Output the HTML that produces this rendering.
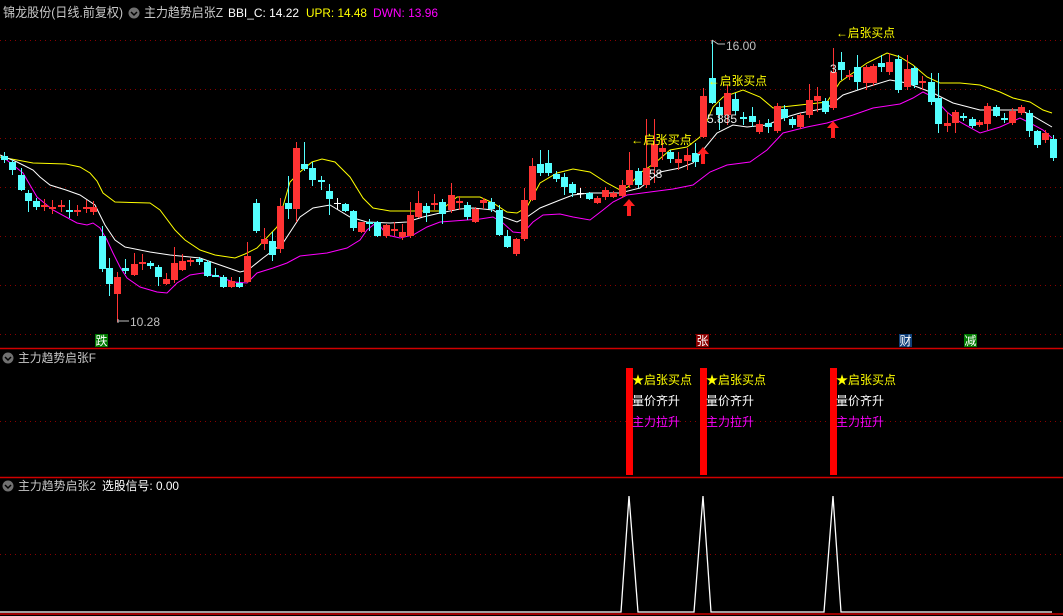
<!DOCTYPE html>
<html><head><meta charset="utf-8"><style>
html,body{margin:0;padding:0;background:#000;width:1063px;height:616px;overflow:hidden}
svg{display:block}
text{font-family:"Liberation Sans","Noto Sans CJK SC",sans-serif}
</style></head><body>
<svg width="1063" height="616" viewBox="0 0 1063 616" xmlns="http://www.w3.org/2000/svg">
<rect width="1063" height="616" fill="#000"/>
<!-- grid -->
<g stroke="#8a0000" stroke-width="1" stroke-dasharray="1,4">
<line x1="0" y1="40.5" x2="1063" y2="40.5"/><line x1="0" y1="89.5" x2="1063" y2="89.5"/>
<line x1="0" y1="138.5" x2="1063" y2="138.5"/><line x1="0" y1="187.5" x2="1063" y2="187.5"/>
<line x1="0" y1="236.5" x2="1063" y2="236.5"/><line x1="0" y1="285.5" x2="1063" y2="285.5"/>
<line x1="0" y1="334.5" x2="1063" y2="334.5"/><line x1="0" y1="421.5" x2="1063" y2="421.5"/>
<line x1="0" y1="554.5" x2="1063" y2="554.5"/>
</g>
<g stroke="#d00000" stroke-width="1.5">
<line x1="0" y1="348.5" x2="1063" y2="348.5"/><line x1="0" y1="477.5" x2="1063" y2="477.5"/><line x1="0" y1="614" x2="1063" y2="614"/>
</g>
<!-- lines -->
<polyline fill="none" stroke="#ffff00" stroke-width="1" points="0,157 17,160 33,163 66,164 80,167 90,173 97,181 103,193 115,202 150,203 160,210 175,230 185,240 200,250 215,255 235,258 245,254 257,248 277,227 290,182 300,172 312,162 322,159 335,162 350,177 363,198 373,208 390,211 440,211 457,197 480,197 493,203 507,212 517,213 527,207 540,183 557,173 573,169 590,172 607,183 620,190 628,187 640,173 655,163 670,150 687,147 700,137 713,107 723,97 743,90 760,97 773,108 800,105 827,102 840,82 867,63 887,53 900,57 913,65 927,77 940,83 960,83 980,85 1000,92 1013,98 1030,102 1043,110 1052,113"/>
<polyline fill="none" stroke="#ffffff" stroke-width="1" points="0,155 17,162 33,170 40,177 50,185 66,190 80,195 95,205 105,225 115,240 125,247 150,252 170,255 200,258 220,265 240,272 248,270 263,258 283,243 300,217 313,208 330,205 350,217 367,222 390,223 407,222 423,217 440,213 460,209 473,208 493,210 503,217 517,222 527,217 540,208 560,200 573,195 590,193 620,193 640,188 660,172 680,168 693,163 703,150 717,133 733,125 747,127 767,125 783,118 800,113 827,108 843,95 867,87 890,80 907,83 920,88 933,93 953,103 980,110 1020,110 1033,116 1052,127"/>
<polyline fill="none" stroke="#ff00ff" stroke-width="1" points="3,157 23,173 37,197 53,210 77,223 87,225 93,223 100,228 107,240 113,253 120,267 127,278 140,287 157,292 167,293 177,283 190,275 203,273 220,277 233,282 247,283 257,273 273,268 287,263 300,256 327,253 347,248 360,240 367,230 377,222 387,235 400,238 413,235 427,227 440,222 467,220 480,219 493,217 503,223 513,232 523,233 533,222 543,215 560,214 573,217 590,220 603,210 613,202 627,195 650,192 673,189 693,185 710,172 727,165 750,162 767,150 783,133 807,127 827,123 853,115 873,108 900,104 913,98 923,92 933,97 947,112 960,122 980,133 1000,127 1020,118 1030,123 1043,130 1052,138"/>
<!-- cyan candles -->
<g fill="#54ffff" stroke="#54ffff" stroke-width="1">
<path fill="none" d="M4.5 152V163M12.5 160V175M21.5 168V191M28.5 190V212M36.5 198V210M69.5 200V218M102.5 226V272M109.5 258V296M125.5 259V274M150.5 261V269M158.5 265V286M199.5 257V265M207.5 260V277M215.5 268V277M223.5 275V288M239.5 277V288M256.5 199V233M272.5 232V261M288.5 176V219M304.5 142V171M312.5 162V186M321.5 176V190M329.5 184V215M345.5 203V212M353.5 210V231M369.5 219V231M377.5 221V237M426.5 203V222M442.5 199V224M467.5 202V220M491.5 198V212M499.5 205V236M507.5 230V248M540.5 150V176M548.5 150V176M556.5 171V182M564.5 173V195M572.5 182V197M589.5 192V200M638.5 168V188M670.5 150V163M695.5 143V167M712.5 40V104M719.5 102V130M735.5 93V115M743.5 112V125M752.5 107V127M768.5 119V133M784.5 105V121M792.5 117V128M825.5 98V114M841.5 52V80M857.5 55V90M881.5 55V72M898.5 55V93M914.5 66V88M931.5 73V105M938.5 73V133M963.5 113V121M972.5 117V128M996.5 105V117M1004.5 113V123M1029.5 110V137M1037.5 130V148M1053.5 135V161"/>
<g stroke="none">
<rect x="1" y="156" width="7" height="4"/><rect x="9" y="162" width="7" height="8"/><rect x="18" y="175" width="7" height="15"/><rect x="25" y="193" width="7" height="8"/><rect x="33" y="201" width="7" height="6"/><rect x="66" y="210" width="7" height="2"/><rect x="99" y="236" width="7" height="33"/><rect x="106" y="268" width="7" height="16"/><rect x="122" y="268" width="7" height="3"/><rect x="147" y="263" width="7" height="3"/><rect x="155" y="267" width="7" height="10"/><rect x="196" y="259" width="7" height="3"/><rect x="204" y="262" width="7" height="14"/><rect x="212" y="275" width="7" height="2"/><rect x="220" y="277" width="7" height="10"/><rect x="236" y="283" width="7" height="4"/><rect x="253" y="203" width="7" height="28"/><rect x="269" y="241" width="7" height="14"/><rect x="285" y="203" width="7" height="6"/><rect x="301" y="164" width="7" height="5"/><rect x="309" y="168" width="7" height="12"/><rect x="318" y="180" width="7" height="2"/><rect x="326" y="191" width="7" height="8"/><rect x="342" y="204" width="7" height="7"/><rect x="350" y="211" width="7" height="17"/><rect x="366" y="222" width="7" height="2"/><rect x="374" y="222" width="7" height="14"/><rect x="423" y="206" width="7" height="7"/><rect x="439" y="202" width="7" height="12"/><rect x="464" y="205" width="7" height="12"/><rect x="488" y="202" width="7" height="7"/><rect x="496" y="210" width="7" height="25"/><rect x="504" y="236" width="7" height="11"/><rect x="537" y="164" width="7" height="9"/><rect x="545" y="163" width="7" height="10"/><rect x="553" y="174" width="7" height="5"/><rect x="561" y="177" width="7" height="10"/><rect x="569" y="184" width="7" height="9"/><rect x="586" y="193" width="7" height="6"/><rect x="635" y="171" width="7" height="14"/><rect x="667" y="152" width="7" height="7"/><rect x="692" y="153" width="7" height="9"/><rect x="709" y="78" width="7" height="25"/><rect x="716" y="107" width="7" height="8"/><rect x="732" y="99" width="7" height="12"/><rect x="740" y="117" width="7" height="2"/><rect x="749" y="116" width="7" height="6"/><rect x="765" y="123" width="7" height="4"/><rect x="781" y="109" width="7" height="9"/><rect x="789" y="119" width="7" height="6"/><rect x="822" y="101" width="7" height="11"/><rect x="838" y="62" width="7" height="8"/><rect x="854" y="67" width="7" height="15"/><rect x="878" y="63" width="7" height="4"/><rect x="895" y="59" width="7" height="31"/><rect x="911" y="68" width="7" height="17"/><rect x="928" y="82" width="7" height="20"/><rect x="935" y="98" width="7" height="26"/><rect x="960" y="116" width="7" height="2"/><rect x="969" y="119" width="7" height="7"/><rect x="993" y="107" width="7" height="9"/><rect x="1001" y="118" width="7" height="2"/><rect x="1026" y="113" width="7" height="18"/><rect x="1034" y="131" width="7" height="14"/><rect x="1050" y="139" width="7" height="19"/>
</g></g>
<!-- white dojis -->
<path stroke="#fff" fill="none" d="M337.5 198V209M334 203.5H341M580.5 188V198M577 193.5H584"/>
<!-- red candles -->
<g fill="#ff3333">
<path fill="none" stroke="#ff3333" d="M44.5 199V211M52.5 200V214M61.5 200V212M77.5 205V216M86.5 200V213M93.5 201V215M117.5 272V322M134.5 253V276M142.5 254V270M166.5 273V285M174.5 247V283M182.5 254V271M190.5 258V266M231.5 277V288M247.5 242V283M264.5 228V250M280.5 198V253M296.5 142V222M361.5 222V233M386.5 224V238M394.5 222V236M402.5 224V240M410.5 202V238M418.5 191V218M434.5 194V210M451.5 183V213M459.5 196V210M475.5 207V223M483.5 198V209M516.5 238V256M524.5 188V241M532.5 158V201M597.5 196V204M605.5 187V200M613.5 191V198M622.5 180V198M629.5 152V188M646.5 119V188M654.5 119V183M662.5 140V160M678.5 152V170M687.5 148V170M703.5 88V138M727.5 85V125M759.5 120V134M777.5 103V133M800.5 113V129M809.5 84V118M817.5 87V112M833.5 48V110M849.5 70V80M866.5 65V90M873.5 64V86M889.5 53V75M907.5 55V90M922.5 76V90M947.5 112V132M955.5 110V133M979.5 120V127M987.5 103V130M1012.5 108V125M1021.5 105V115M1045.5 130V143"/>
<rect x="41" y="205" width="7" height="2"/><rect x="49" y="207" width="7" height="2"/><rect x="58" y="205" width="7" height="2"/><rect x="74" y="210" width="7" height="2"/><rect x="83" y="207" width="7" height="2"/><rect x="90" y="207" width="7" height="5"/><rect x="114" y="277" width="7" height="17"/><rect x="131" y="264" width="7" height="11"/><rect x="139" y="262" width="7" height="2"/><rect x="163" y="279" width="7" height="5"/><rect x="171" y="263" width="7" height="17"/><rect x="179" y="261" width="7" height="9"/><rect x="187" y="260" width="7" height="2"/><rect x="228" y="281" width="7" height="6"/><rect x="244" y="256" width="7" height="26"/><rect x="261" y="239" width="7" height="5"/><rect x="277" y="206" width="7" height="43"/><rect x="293" y="148" width="7" height="61"/><rect x="358" y="222" width="7" height="10"/><rect x="383" y="225" width="7" height="11"/><rect x="391" y="229" width="7" height="2"/><rect x="399" y="232" width="7" height="5"/><rect x="407" y="215" width="7" height="21"/><rect x="415" y="203" width="7" height="14"/><rect x="431" y="203" width="7" height="2"/><rect x="448" y="195" width="7" height="15"/><rect x="456" y="201" width="7" height="2"/><rect x="472" y="209" width="7" height="13"/><rect x="480" y="200" width="7" height="3"/><rect x="513" y="239" width="7" height="15"/><rect x="521" y="200" width="7" height="39"/><rect x="529" y="166" width="7" height="34"/><rect x="594" y="198" width="7" height="5"/><rect x="602" y="190" width="7" height="7"/><rect x="610" y="193" width="7" height="4"/><rect x="619" y="185" width="7" height="11"/><rect x="626" y="170" width="7" height="15"/><rect x="643" y="168" width="7" height="17"/><rect x="651" y="144" width="7" height="23"/><rect x="659" y="148" width="7" height="4"/><rect x="675" y="159" width="7" height="4"/><rect x="684" y="155" width="7" height="6"/><rect x="700" y="96" width="7" height="41"/><rect x="724" y="93" width="7" height="22"/><rect x="756" y="124" width="7" height="8"/><rect x="774" y="106" width="7" height="25"/><rect x="797" y="115" width="7" height="12"/><rect x="806" y="100" width="7" height="15"/><rect x="814" y="96" width="7" height="5"/><rect x="830" y="72" width="7" height="36"/><rect x="846" y="75" width="7" height="2"/><rect x="863" y="67" width="7" height="16"/><rect x="870" y="66" width="7" height="17"/><rect x="886" y="62" width="7" height="10"/><rect x="904" y="69" width="7" height="18"/><rect x="919" y="81" width="7" height="2"/><rect x="944" y="123" width="7" height="3"/><rect x="952" y="112" width="7" height="11"/><rect x="976" y="122" width="7" height="3"/><rect x="984" y="106" width="7" height="18"/><rect x="1009" y="111" width="7" height="12"/><rect x="1018" y="107" width="7" height="6"/><rect x="1042" y="133" width="7" height="7"/>
</g>
<!-- red arrows -->
<g fill="#ff2020">
<path d="M629 199L623 206H627V216H631V206H635Z"/>
<path d="M703 147L697 154H701V164H705V154H709Z"/>
<path d="M833 121L827 128H831V138H835V128H839Z"/>
</g>
<!-- annotations -->
<g font-size="12" fill="#ffff00">
<text x="631" y="144" textLength="61" lengthAdjust="spacingAndGlyphs">←启张买点</text>
<text x="708" y="85" textLength="59" lengthAdjust="spacingAndGlyphs">←启张买点</text>
<text x="836" y="37" textLength="59" lengthAdjust="spacingAndGlyphs">←启张买点</text>
</g>
<g font-size="12" fill="#e8e8e8">
<text x="707" y="123">5.885</text>
<text x="649" y="178">58</text>
<text x="830" y="73">3</text>
</g>
<g font-size="12" fill="#c0c0c0">
<text x="726" y="50">16.00</text>
<text x="130" y="326">10.28</text>
</g>
<path d="M712 40L718 44H725M712 40V44M118 321H129M118 319V323" stroke="#c0c0c0" fill="none"/>
<!-- bottom tags -->
<rect x="95" y="334" width="13" height="13" fill="#007a00"/><text x="95.5" y="345" font-size="12" fill="#fff">跌</text>
<rect x="696" y="334" width="13" height="13" fill="#8b0000"/><text x="696.5" y="345" font-size="12" fill="#fff">张</text>
<rect x="899" y="334" width="13" height="13" fill="#10407a"/><text x="899.5" y="345" font-size="12" fill="#fff">财</text>
<rect x="964" y="334" width="13" height="13" fill="#007a00"/><text x="964.5" y="345" font-size="12" fill="#fff">减</text>
<!-- header -->
<text x="3" y="17" font-size="13" fill="#c8c8c8" textLength="120" lengthAdjust="spacingAndGlyphs">锦龙股份(日线.前复权)</text>
<circle cx="134" cy="13" r="5.5" fill="#707070"/><path d="M131 12L134 15L137 12" stroke="#000" stroke-width="1.5" fill="none"/>
<text x="144" y="17" font-size="13" fill="#c8c8c8" textLength="79" lengthAdjust="spacingAndGlyphs">主力趋势启张Z</text>
<text x="228" y="17" font-size="12" fill="#ffffff" textLength="71" lengthAdjust="spacingAndGlyphs">BBI_C: 14.22</text>
<text x="306" y="17" font-size="12" fill="#ffff00" textLength="61" lengthAdjust="spacingAndGlyphs">UPR: 14.48</text>
<text x="373" y="17" font-size="12" fill="#ff00ff" textLength="65" lengthAdjust="spacingAndGlyphs">DWN: 13.96</text>
<!-- panel 2 -->
<circle cx="8" cy="358" r="5.5" fill="#707070"/><path d="M5 357L8 360L11 357" stroke="#000" stroke-width="1.5" fill="none"/>
<text x="18" y="362" font-size="12" fill="#c8c8c8" textLength="78" lengthAdjust="spacingAndGlyphs">主力趋势启张F</text>
<g fill="#ff0000"><rect x="626" y="368" width="7" height="107"/><rect x="700" y="368" width="7" height="107"/><rect x="830" y="368" width="7" height="107"/></g>
<g font-size="12">
<text x="632" y="384" fill="#ffff00">★启张买点</text><text x="632" y="405" fill="#fff">量价齐升</text><text x="632" y="426" fill="#ff00ff">主力拉升</text>
<text x="706" y="384" fill="#ffff00">★启张买点</text><text x="706" y="405" fill="#fff">量价齐升</text><text x="706" y="426" fill="#ff00ff">主力拉升</text>
<text x="836" y="384" fill="#ffff00">★启张买点</text><text x="836" y="405" fill="#fff">量价齐升</text><text x="836" y="426" fill="#ff00ff">主力拉升</text>
</g>
<!-- panel 3 -->
<circle cx="8" cy="486" r="5.5" fill="#707070"/><path d="M5 485L8 488L11 485" stroke="#000" stroke-width="1.5" fill="none"/>
<text x="18" y="490" font-size="12" fill="#c8c8c8" textLength="78" lengthAdjust="spacingAndGlyphs">主力趋势启张2</text>
<text x="102" y="490" font-size="12" fill="#ffffff" textLength="77" lengthAdjust="spacingAndGlyphs">选股信号: 0.00</text>
<polyline fill="none" stroke="#fff" stroke-width="1.3" points="0,612 621,612 629,496 638,612 694,612 703,496 711,612 824,612 833,496 841,612 1052,612"/>
</svg>
</body></html>
